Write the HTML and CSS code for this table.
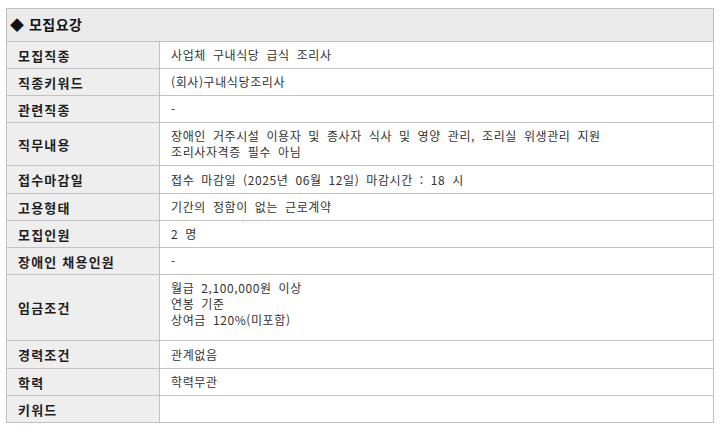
FILE: index.html
```html
<!DOCTYPE html>
<html lang="ko">
<head>
<meta charset="utf-8">
<link rel="stylesheet" href="styles.css">
</head>
<body>
<table class="recruit">
  <colgroup>
    <col class="col-label">
    <col class="col-value">
  </colgroup>
  <thead>
    <tr><th colspan="2" class="title">◆ 모집요강</th></tr>
  </thead>
  <tbody>
    <tr><th>모집직종</th><td>사업체 구내식당 급식 조리사</td></tr>
    <tr><th>직종키워드</th><td>(회사)구내식당조리사</td></tr>
    <tr><th>관련직종</th><td>-</td></tr>
    <tr><th>직무내용</th><td>장애인 거주시설 이용자 및 종사자 식사 및 영양 관리, 조리실 위생관리 지원<br>조리사자격증 필수 아님</td></tr>
    <tr class="r28"><th>접수마감일</th><td>접수 마감일 (2025년 06월 12일) 마감시간 : 18 시</td></tr>
    <tr><th>고용형태</th><td>기간의 정함이 없는 근로계약</td></tr>
    <tr><th>모집인원</th><td>2 명</td></tr>
    <tr><th>장애인 채용인원</th><td>-</td></tr>
    <tr><th>임금조건</th><td class="tall">월급 2,100,000원 이상<br>연봉 기준<br>상여금 120%(미포함)</td></tr>
    <tr class="r28"><th>경력조건</th><td>관계없음</td></tr>
    <tr><th>학력</th><td>학력무관</td></tr>
    <tr><th>키워드</th><td></td></tr>
  </tbody>
</table>
</body>
</html>
```
FILE: styles.css
```css
html, body {
  margin: 0;
  padding: 0;
  background: #ffffff;
}
body {
  padding: 8px 0 0 6px;
  font-family: "Noto Sans CJK KR", "Noto Sans", sans-serif;
  color: #333333;
}
.recruit {
  border-collapse: collapse;
  width: 708px;
  table-layout: fixed;
}
.col-label {
  width: 153px;
}
.recruit th,
.recruit td {
  border: 1px solid #c2c2c2;
  text-align: left;
  vertical-align: middle;
}
.recruit .title {
  background: #ebebeb;
  height: 30px;
  padding: 0 0 2px 3px;
  font-size: 14px;
  font-weight: bold;
  color: #111111;
  letter-spacing: 0.5px;
}
.recruit tbody th {
  background: #eeeeee;
  padding: 0 10px 0 11px;
  font-size: 13px;
  font-weight: bold;
  color: #1e1e1e;
  height: 26px;
  white-space: nowrap;
  letter-spacing: 1.2px;
}
.recruit td {
  padding: 5px 11px;
  font-size: 12px;
  line-height: 16px;
  color: #333333;
  height: 16px;
  word-spacing: 3px;
  letter-spacing: 0.6px;
}
.recruit td.tall {
  padding-bottom: 12px;
}
.recruit tr.r28 th {
  height: 27px;
}
```
